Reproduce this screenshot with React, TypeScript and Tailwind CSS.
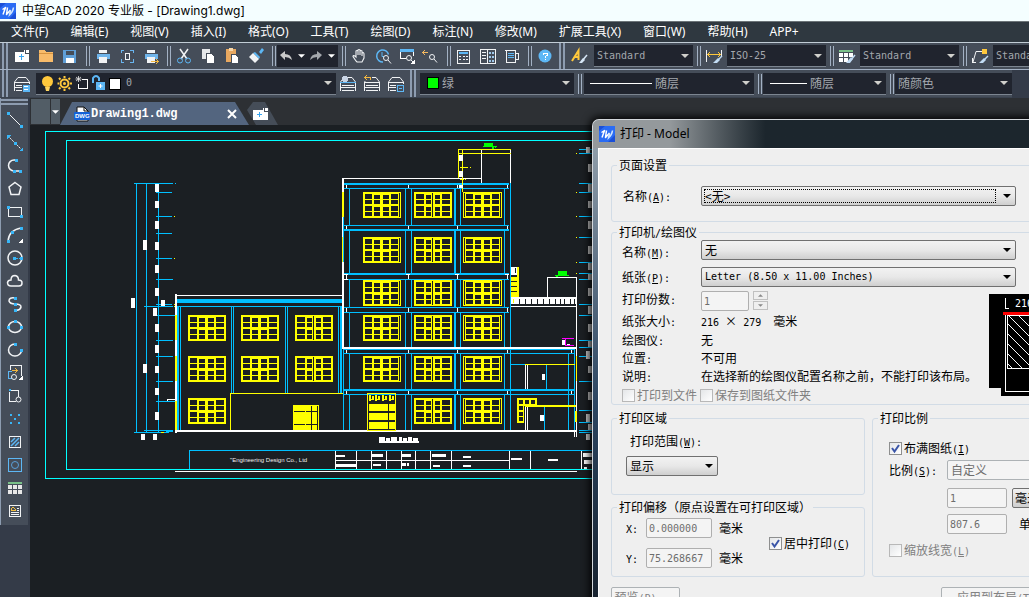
import type { ReactNode } from "react";

const SKY = "#00bfff";
const YEL = "#ffff00";
const WHT = "#ffffff";
const INK = "#1b1f23";

/* ---------- small shared pieces ---------- */

// Chinese runs and Latin runs use different faces, "_X" underlines the hot key
function Mixed({ text }: { text: string }) {
  const runs = text.match(/_[A-Z]|[\x20-\x5e\x60-\x7e]+|[^\x20-\x7e]+/g) ?? [];
  return (
    <span className="whitespace-pre">
      {runs.map((run, i) => {
        if (run[0] === "_")
          return (
            <span key={i} className="font-['DejaVu_Sans_Mono',monospace] text-[10px] leading-none underline">
              {run[1]}
            </span>
          );
        return /[\x20-\x7e]/.test(run) ? (
          <span key={i} className="font-['DejaVu_Sans_Mono',monospace] text-[10px] leading-none">
            {run}
          </span>
        ) : (
          <span key={i}>{run}</span>
        );
      })}
    </span>
  );
}

function Logo() {
  return (
    <svg viewBox="0 0 16 16" className="h-4 w-4 shrink-0">
      <rect width="16" height="16" fill="#2a6cf4" />
      <path d="M0 5 L6 0 H0Z M16 9 L9 16 H16Z" fill="#1a4fd8" />
      <path d="M2.500 6.500 L5.500 4.500 L3 11.500 M7.500 4.500 L6.500 11.500 L10.500 7" fill="none" stroke="#fff" strokeWidth="1.500" strokeLinejoin="round" />
      <path d="M10.500 7 L9.500 12 Q13 9 13.500 4.500" fill="none" stroke="#cfe4ff" strokeWidth="1.500" />
    </svg>
  );
}

function Grip() {
  return (
    <span className="flex w-[9px] shrink-0 justify-end pr-px">
      <span className="h-5 w-1 border-x border-[#a3b1c4]" />
    </span>
  );
}

function EdgeGrip() {
  return (
    <span className="flex w-[10px] shrink-0 justify-center self-stretch">
      <span className="w-[6px] border-x-2 border-[#8d9cb0]" />
    </span>
  );
}

function Arrow({ className }: { className: string }) {
  return (
    <svg viewBox="0 0 8 4" className={className}>
      <path d="M0 0 H8 L4 4Z" fill="currentColor" />
    </svg>
  );
}

function Tool({ name, children }: { name: string; children: ReactNode }) {
  return (
    <button aria-label={name} className="flex h-6 w-6 shrink-0 items-center justify-center">
      <svg viewBox="0 0 24 24" className="h-6 w-6" fill="none" stroke="#f1f3f5" shapeRendering="crispEdges">
        {children}
      </svg>
    </button>
  );
}

function Combo({
  name,
  value,
  width,
  latin,
  children,
}: {
  name: string;
  value: string;
  width: string;
  latin?: boolean;
  children?: ReactNode;
}) {
  return (
    <span className={`relative flex h-[22px] shrink-0 items-center border-b border-[#7c8590] bg-[#20242e] text-[#a3a7ad] ${width}`}>
      {children}
      <select
        aria-label={name}
        className={`h-full min-w-0 flex-1 appearance-none bg-transparent pl-[3px] ${
          latin ? "font-['DejaVu_Sans_Mono',monospace] text-[10px]" : "text-xs"
        }`}
      >
        <option>{value}</option>
      </select>
      <Arrow className="pointer-events-none absolute right-1 h-1 w-2 text-[#d0d0cc]" />
    </span>
  );
}

/* ---------- top bars ---------- */

const MENUS = [
  "文件(F)",
  "编辑(E)",
  "视图(V)",
  "插入(I)",
  "格式(O)",
  "工具(T)",
  "绘图(D)",
  "标注(N)",
  "修改(M)",
  "扩展工具(X)",
  "窗口(W)",
  "帮助(H)",
  "APP+",
];

function Printer() {
  return (
    <>
      <rect x="8" y="6" width="8" height="3" fill="#f1f3f5" stroke="none" />
      <rect x="6" y="10" width="13" height="5" fill="#6fb4ea" stroke="none" />
      <rect x="8" y="13" width="8" height="6" fill="#f1f3f5" stroke="none" />
    </>
  );
}

function Stack() {
  return (
    <>
      <path d="M8 5.500 H16" />
      <path d="M8 5.500 L4.500 10 M16 5.500 L19.500 10" shapeRendering="auto" />
      <path d="M4 10.500 H20 M6 13.500 H18 M4 15.500 H20 M4.500 11 V19 M19.500 11 V19 M6 18.500 H18" />
    </>
  );
}

function StandardBar() {
  return (
    <div className="flex h-[27px] shrink-0 items-center border-b border-[#a3b1c4] bg-[#454d59]">
      <EdgeGrip />
      <Tool name="新建">
        <path d="M5 8 H14 V6 H19 V18 H5Z" fill="#fff" stroke="none" />
        <path d="M15.500 6 V9.500 H19" stroke="#454d59" />
        <path d="M11.500 10 V16 M9 12.500 H14" stroke="#38a4f0" />
      </Tool>
      <Tool name="打开">
        <path d="M5 6 H10 L12 8 H19 V18 H5Z" fill="#f8bb6a" stroke="none" />
        <path d="M5 9.500 H19" stroke="#d89440" />
      </Tool>
      <Tool name="保存">
        <rect x="5" y="6" width="13" height="13" fill="#5f9fd8" stroke="none" />
        <rect x="8" y="7" width="8" height="4" fill="#454d59" stroke="none" />
        <rect x="8" y="14" width="8" height="5" fill="#fff" stroke="none" />
      </Tool>
      <Grip />
      <Tool name="打印">
        <Printer />
      </Tool>
      <Tool name="打印预览">
        <path d="M6 9 V6.500 H9 M15 6.500 H18 V9 M18 15 V18.500 H15 M9 18.500 H6 V15" stroke="#69b5f0" />
        <rect x="10.500" y="9.500" width="4" height="6" />
      </Tool>
      <Tool name="发布">
        <Printer />
        <path d="M12 17.500 H19 M17 15 L19 17.500 L17 20" stroke="#f4b840" />
      </Tool>
      <Grip />
      <Tool name="剪切">
        <g shapeRendering="auto">
          <path d="M8 5 L15 15 M16 5 L9 15" strokeWidth="1.500" />
          <circle cx="8" cy="16.500" r="2.500" stroke="#5db7f5" />
          <circle cx="16" cy="16.500" r="2.500" stroke="#5db7f5" />
        </g>
      </Tool>
      <Tool name="复制">
        <rect x="6" y="5" width="8" height="10" fill="#e6e8ea" stroke="none" />
        <path d="M10 9 H15 L18 12 V19 H10Z" fill="#fff" stroke="#454d59" />
      </Tool>
      <Tool name="粘贴">
        <rect x="6" y="5" width="10" height="13" fill="#e8a860" stroke="none" />
        <rect x="9" y="4" width="4" height="3" fill="#f6d6a8" stroke="none" />
        <path d="M11 10 H15 L18 13 V19 H11Z" fill="#fff" stroke="#454d59" />
      </Tool>
      <Tool name="格式刷">
        <g shapeRendering="auto" stroke="none">
          <path d="M15 8 L18 4 L20 6 L17 10Z" fill="#5db7f5" />
          <path d="M11 8 L16 13 L15 15 L9 9Z" fill="#5db7f5" />
          <path d="M9 9 L15 15 L11 19 L5 13Z" fill="#f1f3f5" />
        </g>
      </Tool>
      <Grip />
      <div className="flex h-[22px] w-[61px] shrink-0 items-center justify-around bg-[#20242e] text-white">
        <button aria-label="放弃">
          <svg viewBox="0 0 12 10" className="h-[10px] w-3">
            <path d="M0 4 L5 0 V3 Q11 3 12 9 Q9 6 5 6 V9Z" fill="#c9c9c9" />
          </svg>
        </button>
        <button aria-label="放弃列表">
          <Arrow className="h-1 w-[7px]" />
        </button>
        <button aria-label="重做">
          <svg viewBox="0 0 12 10" className="h-[10px] w-3">
            <path d="M12 4 L7 0 V3 Q1 3 0 9 Q3 6 7 6 V9Z" fill="#a4a8ad" />
          </svg>
        </button>
        <button aria-label="重做列表">
          <Arrow className="h-1 w-[7px]" />
        </button>
      </div>
      <Grip />
      <Tool name="平移">
        <path
          d="M9 17 L6 12.500 Q6 11 8 12 L9 13 V7 Q10 6 11 7 V11 V6 Q12 5 13 6 V11 V7 Q14 6 15 7 V12 V9 Q17 8 17 10 V14 L15 18 H10Z"
          shapeRendering="auto"
          strokeWidth="1.100"
        />
      </Tool>
      <Tool name="实时缩放">
        <g shapeRendering="auto">
          <path d="M12 18 A6 6 0 1 1 17.500 10.500" stroke="#5db7f5" strokeWidth="1.500" />
          <path d="M11 8 V12.500 H13" stroke="#5db7f5" />
          <circle cx="15" cy="14" r="2.500" />
          <path d="M17 16 L20 19.500" />
        </g>
      </Tool>
      <Tool name="窗口缩放">
        <path d="M5.500 14.500 V6 H18 V12 M5.500 14.500 H11" stroke="#fff" />
        <path d="M5 6.500 H19" stroke="#5db7f5" strokeWidth="3" />
        <circle cx="14" cy="14" r="2.500" shapeRendering="auto" />
        <path d="M16 16 L18 18" />
        <path d="M20 15 V20 H15Z" fill="#fff" stroke="none" />
      </Tool>
      <Tool name="缩放上一个">
        <path d="M4 8.500 H9 M6 6 L4 8.500 L6 11" stroke="#f4b860" />
        <g shapeRendering="auto">
          <circle cx="13" cy="13" r="2.500" />
          <path d="M15 15 L18 18.500" />
        </g>
      </Tool>
      <Grip />
      <Tool name="特性">
        <rect x="5.500" y="6.500" width="12" height="13" />
        <path d="M7 9 H16" stroke="#5db7f5" strokeWidth="2" />
        <path d="M7 12.500 H9 M11 12.500 H16 M7 15.500 H9 M11 15.500 H16" strokeDasharray="2 1" />
      </Tool>
      <Tool name="设计中心">
        <rect x="4.500" y="5.500" width="15" height="14" />
        <path d="M11.500 5 V20 M6 8.500 H10 M6 11.500 H10 M6 14.500 H10" />
        <path d="M13 8.500 H15 M16 8.500 H18 M13 12.500 H15 M16 12.500 H18 M13 16.500 H15 M16 16.500 H18" strokeWidth="2" stroke="#9fc8ea" />
      </Tool>
      <Tool name="工具选项板">
        <path d="M6 6.500 H15.500 V18.500 H6.500Z M16 9.500 H18.500 V15.500 H16" />
        <path d="M8 9.500 H14 M8 11.500 H14 M8 13.500 H14" stroke="#5db7f5" />
      </Tool>
      <Grip />
      <Tool name="帮助">
        <circle cx="12" cy="12" r="6.500" fill="#5db7f5" stroke="none" shapeRendering="auto" />
        <path d="M10 10.500 V9.500 H12 L14 9.500 V11.500 L12.500 12.500 V14 M12.500 15 V16" stroke="#fff" />
      </Tool>
      <EdgeGrip />
      <Tool name="文字样式">
        <g shapeRendering="auto">
          <path d="M5 17 L11.500 6.500 V16 M8 13 H12" stroke="#ffc83c" strokeWidth="2" />
          <path d="M20 11 L15 17" stroke="#d6e6f6" strokeWidth="1.500" />
          <path d="M16 14 L18 16 L15 19 H12Z" fill="#d6e6f6" stroke="none" />
        </g>
      </Tool>
      <Combo name="文字样式" value="Standard" width="ml-[3px] w-[99px]" latin />
      <Grip />
      <Tool name="标注样式">
        <path d="M4.500 6 V18 M19.500 6 V12" strokeWidth="1" />
        <path d="M6 10.500 H18 M8 8 L6 10.500 L8 13 M16 8 L18 10.500 L16 13" stroke="#ffc83c" />
        <path d="M20 12 L15 17" stroke="#c2dcf4" strokeWidth="1.500" shapeRendering="auto" />
        <path d="M16 14 L18 16 L15 19 H11Z" fill="#c2dcf4" stroke="none" shapeRendering="auto" />
      </Tool>
      <Combo name="标注样式" value="ISO-25" width="ml-px w-[99px]" latin />
      <Grip />
      <Tool name="表格样式">
        <rect x="4" y="6" width="14" height="2" fill="#79c089" stroke="none" />
        <path d="M4 9 H8 V13 H4Z M9 9 H13 V13 H9Z M14 9 H18 V13 H14Z M4 14 H8 V18 H4Z M9 14 H13 V18 H9Z" fill="#fff" stroke="none" />
        <path d="M20 11 L16 16" stroke="#c2dcf4" strokeWidth="1.500" shapeRendering="auto" />
        <path d="M16 13 L18 15 L15 19 H11Z" fill="#c2dcf4" stroke="none" shapeRendering="auto" />
      </Tool>
      <Combo name="表格样式" value="Standard" width="ml-px w-[99px]" latin />
      <Grip />
      <Tool name="多重引线样式">
        <path d="M5 18 L8 7.500 H14" shapeRendering="auto" />
        <path d="M4.500 14 V18.500 H8" />
        <rect x="14" y="5" width="5" height="5" fill="#ffc83c" stroke="none" />
        <path d="M20 12 L15 17" stroke="#c2dcf4" strokeWidth="1.500" shapeRendering="auto" />
        <path d="M16 14 L18 16 L15 19 H11Z" fill="#c2dcf4" stroke="none" shapeRendering="auto" />
      </Tool>
      <Combo name="多重引线样式" value="Standard" width="ml-px w-[99px]" latin />
    </div>
  );
}

function LayerBar() {
  return (
    <div className="flex h-7 shrink-0 bg-[#343b48]">
      <div className="flex w-[1012px] shrink-0 items-center border-b border-[#3a424e] bg-[#454d59]">
        <EdgeGrip />
        <Tool name="图层特性">
          <Stack />
          <rect x="12" y="12" width="8" height="8" fill="#5db7f5" stroke="#454d59" />
          <path d="M14 14.500 H18 M14 17.500 H18" stroke="#fff" />
        </Tool>
        <Combo name="图层" value="0" width="ml-[2px] w-[300px]" latin>
          <svg viewBox="0 0 82 20" className="ml-[5px] h-5 w-[82px] shrink-0">
            <circle cx="6.500" cy="8.500" r="5.500" fill="#ffc83c" />
            <path d="M4 14 H9 L8 18 H5Z" fill="#ffd560" />
            <circle cx="23.500" cy="10.500" r="4" fill="none" stroke="#ffc83c" strokeWidth="2" />
            <circle cx="23.500" cy="10.500" r="1.500" fill="#ffc83c" />
            <path
              d="M23.500 3 V5 M23.500 16 V18 M16.500 10.500 H18 M29 10.500 H31 M18 5 L19.500 6.500 M29 5 L27.500 6.500 M18 16 L19.500 14.500 M29 16 L27.500 14.500"
              stroke="#ffc83c"
              strokeWidth="2"
            />
            <path d="M41 6.500 H46.500 V15.500 H37.500 V11" fill="none" stroke="#fff" shapeRendering="crispEdges" />
            <path d="M37.500 3 V9 M34.500 6 H40.500 M35 4 L40 8 M40 4 L35 8" stroke="#e6e6e6" strokeWidth=".8" />
            <path d="M52 10 V5 Q55 1 58 5 V8" fill="none" stroke="#5db7f5" strokeWidth="2" />
            <rect x="55" y="9" width="9" height="8" fill="#5db7f5" />
            <path d="M59.500 11 V15 M57.500 13 H61.500" stroke="#fff" />
            <rect x="68.500" y="5.500" width="11" height="11" fill="#fff" stroke="#000" />
          </svg>
        </Combo>
        <Tool name="置为当前图层">
          <Stack />
          <circle cx="9" cy="7" r="3" fill="#c9d4e4" stroke="none" />
          <path d="M4 10.500 H20" stroke="#5db7f5" />
        </Tool>
        <Tool name="上一个图层">
          <Stack />
          <rect x="3" y="3" width="9" height="6" fill="#454d59" stroke="none" />
          <path d="M5 5.500 H10 V8 M7 3 L5 5.500 L7 8" stroke="#f4b840" />
        </Tool>
        <Tool name="图层状态">
          <Stack />
          <rect x="12" y="12" width="9" height="9" fill="#454d59" stroke="none" />
          <rect x="13.500" y="13.500" width="6" height="6" stroke="#5db7f5" />
          <path d="M15 16.500 H18" stroke="#5db7f5" />
        </Tool>
        <EdgeGrip />
        <Combo name="颜色" value="绿" width="ml-[2px] w-[154px]">
          <span className="ml-[7px] h-3 w-3 shrink-0 border border-black bg-[#00ff00]" />
        </Combo>
        <Grip />
        <Combo name="线型" value="随层" width="ml-px w-[170px]">
          <span className="ml-[6px] h-px w-[62px] shrink-0 bg-white" />
        </Combo>
        <Grip />
        <Combo name="线宽" value="随层" width="w-[123px]">
          <span className="ml-[7px] h-px w-[37px] shrink-0 bg-white" />
        </Combo>
        <Grip />
        <Combo name="打印样式" value="随颜色" width="w-[117px]" />
      </div>
    </div>
  );
}

/* ---------- left drawing tools ---------- */

function Dot({ x, y }: { x: number; y: number }) {
  return <rect x={x - 1.5} y={y - 1.5} width="3" height="3" fill="#38b6f8" stroke="none" />;
}

function DrawBar() {
  return (
    <aside className="w-[30px] shrink-0 bg-[#343b48] pr-[2px]">
      <div className="flex flex-col items-center border-l border-[#8d9cb0] bg-[#454d59] pt-px">
        <span className="h-[6px] w-full border-y-2 border-[#8d9cb0]" />
        <div className="flex flex-col py-[3px] [&>button]:h-[23px]">
          <Tool name="直线">
            <path d="M6 6 L18 18" shapeRendering="auto" />
            <Dot x={5.5} y={5.5} />
            <Dot x={18.5} y={18.5} />
          </Tool>
          <Tool name="构造线">
            <path d="M5 5 L19 19" strokeDasharray="2 1" shapeRendering="auto" />
            <path d="M4 4 H8 L4 8Z M20 20 H16 L20 16Z" fill="#38b6f8" stroke="none" />
            <Dot x={12} y={12} />
          </Tool>
          <Tool name="多段线">
            <path d="M14 6 H11 A5.500 5.500 0 0 0 11 17 H18" strokeWidth="1.500" shapeRendering="auto" />
            <Dot x={13.5} y={6.5} />
            <Dot x={11.5} y={17} />
            <Dot x={17.5} y={17} />
          </Tool>
          <Tool name="多边形">
            <path d="M12 5.500 L18 10 L16 17.500 H8 L6 10Z" strokeWidth="1.500" shapeRendering="auto" />
          </Tool>
          <Tool name="矩形">
            <path d="M5.500 7.500 H18.500 V16.500 H5.500Z" />
            <Dot x={5.5} y={7.5} />
            <Dot x={18.5} y={16.5} />
          </Tool>
          <Tool name="圆弧">
            <path d="M5 18 Q6 7 18 5" strokeWidth="1.500" shapeRendering="auto" />
            <path d="M20 15 V20 H15Z" fill="#fff" stroke="none" />
            <Dot x={5.5} y={18} />
            <Dot x={9.5} y={9.5} />
            <Dot x={18.5} y={5.5} />
          </Tool>
          <Tool name="圆">
            <circle cx="12" cy="12" r="7" strokeWidth="1.500" shapeRendering="auto" />
            <path d="M13 12 H18" stroke="#38b6f8" strokeDasharray="2 1" />
            <Dot x={11.5} y={12} />
            <Dot x={18.5} y={12} />
          </Tool>
          <Tool name="修订云线">
            <path
              d="M8 17 Q4.500 17 4.500 13.500 Q5 11 8 11 Q8 6.500 12 6.500 Q15.500 7 15.500 11 Q19 11 19 14 Q19 17 16 17Z"
              strokeWidth="1.500"
              shapeRendering="auto"
            />
          </Tool>
          <Tool name="样条曲线">
            <path d="M12 6 Q6 5 6 9 Q7 12 12 12 Q18 12 18 15 Q17 19 12 18" strokeWidth="1.500" shapeRendering="auto" />
            <Dot x={12} y={6} />
            <Dot x={12} y={12} />
            <Dot x={12} y={18} />
          </Tool>
          <Tool name="椭圆">
            <ellipse cx="12" cy="12" rx="6.500" ry="5.500" strokeWidth="1.500" shapeRendering="auto" />
            <Dot x={12} y={6.5} />
            <Dot x={5.5} y={12} />
            <Dot x={18.5} y={12} />
          </Tool>
          <Tool name="椭圆弧">
            <path d="M12 6 A6.500 6 0 1 0 18.500 12" strokeWidth="1.500" shapeRendering="auto" />
            <Dot x={12} y={6} />
            <Dot x={18.5} y={12} />
          </Tool>
          <Tool name="插入块">
            <path d="M7.500 9 V4.500 H18.500 V15" />
            <path d="M9 9.500 H14 M12 7 L14 9.500 L12 12" stroke="#f4b840" />
            <path d="M9 10.500 H5.500 V17 H9" stroke="#5db7f5" />
            <circle cx="11" cy="16" r="2.500" shapeRendering="auto" />
            <path d="M20 14 V19 H15Z" fill="#fff" stroke="none" />
          </Tool>
          <Tool name="创建块">
            <path d="M8 6.500 H15.500 V13 M6.500 8 V17.500 H13" />
            <circle cx="15.500" cy="15.500" r="2.500" shapeRendering="auto" />
            <rect x="6" y="5" width="2" height="2" fill="#38b6f8" stroke="none" />
          </Tool>
          <Tool name="点">
            <path
              d="M7 7 h2 v2 h-2Z M15 7 h2 v2 h-2Z M11 11 h2 v2 h-2Z M7 15 h2 v2 h-2Z M15 15 h2 v2 h-2Z"
              fill="#38b6f8"
              stroke="none"
            />
          </Tool>
          <Tool name="图案填充">
            <rect x="6.500" y="6.500" width="11" height="11" />
            <path d="M8 12 L12 8 M8 16 L16 8 M12 16 L16 12" stroke="#5db7f5" strokeWidth="1.500" shapeRendering="auto" />
          </Tool>
          <Tool name="面域">
            <rect x="5.500" y="5.500" width="13" height="13" stroke="#5db7f5" />
            <circle cx="12" cy="12" r="3.500" stroke="#5a9fd8" shapeRendering="auto" />
          </Tool>
          <Tool name="表格">
            <rect x="5" y="6" width="14" height="2" fill="#79c089" stroke="none" />
            <path
              d="M5 9 h4 v4 h-4Z M10 9 h4 v4 h-4Z M15 9 h4 v4 h-4Z M5 14 h4 v4 h-4Z M10 14 h4 v4 h-4Z M15 14 h4 v4 h-4Z"
              fill="#e8e8e8"
              stroke="none"
            />
          </Tool>
          <Tool name="多行文字">
            <rect x="6.500" y="6.500" width="11" height="11" />
            <path d="M8 12 V10 L10 8 L12 10 V12 M8 11 H12" stroke="#f4c040" />
            <path d="M14 9.500 H16 M14 11.500 H16 M8 13.500 H16 M8 15.500 H16" />
          </Tool>
        </div>
      </div>
    </aside>
  );
}

/* ---------- the drawing ---------- */

type Box = [x: number, y: number, w: number, h: number];

function Boxes({ fill, list }: { fill: string; list: Box[] }) {
  return (
    <g fill={fill}>
      {list.map(([x, y, w, h]) => (
        <rect key={`${x}-${y}-${w}-${h}`} x={x} y={y} width={w} height={h} />
      ))}
    </g>
  );
}

// panes: [offset, width] of each column, bars: thin extra mullions
const WINDOW_KINDS = {
  plain: { w: 38, panes: [[2, 7], [11, 6], [20, 6], [28, 8]], bars: [] as number[] },
  right: { w: 38, panes: [[2, 7], [11, 6], [20, 6], [28, 7]], bars: [36] },
  middle: { w: 38, panes: [[2, 8], [12, 5], [21, 5], [28, 8]], bars: [18] },
  both: { w: 39, panes: [[3, 7], [12, 6], [21, 6], [29, 7]], bars: [1, 37] },
};

function Window({ x, y, kind }: { x: number; y: number; kind: keyof typeof WINDOW_KINDS }) {
  const { w, panes, bars } = WINDOW_KINDS[kind];
  return (
    <g>
      <rect x={x} y={y} width={w} height="26" fill={YEL} />
      {panes.map(([dx, pw], i) => {
        const inner = i === 1 || i === 2 ? 1 : 0;
        return (
          <g key={dx} fill={INK}>
            <rect x={x + dx} y={y + 2 + inner} width={pw} height={5 - inner} />
            <rect x={x + dx} y={y + 8} width={pw} height="4" />
            <rect x={x + dx} y={y + 14 + inner} width={pw} height={5 - inner} />
            <rect x={x + dx} y={y + 20} width={pw} height="4" />
          </g>
        );
      })}
      {bars.map((b) => (
        <rect key={b} x={x + b} y={y + 1} width="1" height="24" fill={INK} />
      ))}
    </g>
  );
}

const FLOORS = [
  [188, 225],
  [229, 273],
  [279, 307],
  [312, 347],
  [353, 389],
  [394, 430],
];
const COLUMNS: [number, number][] = [[349, 1], [405, 1], [411, 1], [454, 2], [460, 1], [504, 1]];
const TICKS: [number, number][] = [[185, 3], [226, 3], [274, 5], [308, 4], [350, 3], [391, 3]];

function Drawing() {
  return (
    <svg viewBox="30 125 999 472" className="h-[472px] w-[999px]" shapeRendering="crispEdges">
      {/* sheet frames */}
      <g fill="none" stroke="#00ffff">
        <rect x="45.500" y="131.500" width="1100" height="347" />
        <rect x="66.500" y="140.500" width="1060" height="329" />
      </g>

      {/* dimensions, left side */}
      <Boxes
        fill={SKY}
        list={[
          [136, 183, 1, 250], [146, 183, 1, 250], [158, 192, 1, 240], [134, 183, 39, 1], [175, 183, 1, 1],
          [156, 192, 16, 1], [156, 216, 16, 1], [156, 233, 16, 1], [156, 258, 16, 1], [156, 279, 17, 1],
          [156, 304, 16, 1], [144, 306, 29, 1], [156, 315, 19, 1], [156, 340, 17, 1], [156, 356, 17, 1],
          [156, 381, 17, 1], [156, 401, 19, 1], [144, 430, 29, 1], [134, 432, 35, 1], [166, 431, 7, 1],
        ]}
      />
      <Boxes
        fill={WHT}
        list={[
          [155, 184, 4, 8], [155, 201, 4, 7], [155, 221, 4, 8], [155, 242, 4, 8], [155, 265, 4, 8], [155, 288, 4, 8],
          [161, 300, 4, 6], [143, 240, 4, 10], [131, 298, 4, 10], [153, 308, 4, 8], [155, 324, 4, 8], [155, 345, 4, 8],
          [143, 364, 4, 9], [155, 366, 4, 7], [155, 388, 4, 7], [155, 412, 4, 8], [141, 434, 4, 6], [153, 434, 4, 6],
          [167, 399, 9, 1], [167, 399, 1, 2],
        ]}
      />
      <Boxes fill={YEL} list={[[174, 216, 1, 1], [174, 258, 1, 1], [174, 304, 1, 1], [174, 306, 1, 1], [161, 432, 3, 1]]} />

      {/* low block */}
      <Boxes
        fill={SKY}
        list={[
          [177, 299, 165, 4], [177, 306, 165, 1], [177, 306, 2, 124], [180, 306, 1, 124], [231, 306, 1, 88],
          [233, 306, 1, 88], [285, 306, 1, 88], [287, 306, 1, 88], [338, 306, 1, 88], [340, 306, 2, 88],
        ]}
      />
      <Boxes fill={WHT} list={[[175, 294, 2, 139], [176, 295, 166, 1]]} />
      <Boxes
        fill={YEL}
        list={[[175, 315, 2, 25], [175, 356, 2, 25], [175, 401, 2, 29], [230, 393, 113, 1], [230, 393, 1, 37], [293, 405, 26, 25]]}
      />
      <Boxes
        fill={INK}
        list={[[294, 411, 11, 1], [306, 411, 11, 1], [294, 424, 11, 1], [306, 424, 11, 1], [311, 406, 1, 24], [317, 406, 1, 24]]}
      />
      {[315, 356].map((y) => (
        <g key={y}>
          <Window x={188} y={y} kind="plain" />
          <Window x={241} y={y} kind="plain" />
          <Window x={295} y={y} kind="middle" />
        </g>
      ))}
      <Window x={188} y={398} kind="plain" />

      {/* tower block */}
      {FLOORS.map(([top, bottom]) => (
        <Boxes key={top} fill={SKY} list={COLUMNS.map(([x, w]): Box => [x, top, w, bottom - top])} />
      ))}
      <Boxes
        fill={SKY}
        list={[
          [343, 183, 166, 2], [343, 188, 166, 1], [343, 225, 166, 1], [343, 229, 166, 2], [343, 273, 166, 2],
          [343, 279, 166, 1], [343, 307, 166, 1], [343, 312, 166, 1], [343, 349, 232, 1], [343, 353, 232, 1],
          [343, 389, 232, 2], [343, 394, 232, 1], [343, 183, 1, 79], [343, 349, 1, 81], [510, 183, 1, 247],
          [568, 353, 1, 77], [574, 349, 1, 81], [511, 364, 14, 1], [546, 365, 1, 24], [544, 407, 1, 23],
        ]}
      />
      {TICKS.map(([y, h]) => (
        <Boxes key={y} fill={WHT} list={[346, 408, 457, 507].map((x): Box => [x, y, 1, h])} />
      ))}
      <Boxes
        fill={WHT}
        list={[
          [342, 178, 2, 14], [342, 217, 1, 20], [342, 262, 2, 87], [342, 178, 140, 1], [343, 274, 5, 1], [343, 279, 5, 1],
          [406, 274, 4, 1], [455, 274, 4, 1], [505, 274, 4, 1],
          [342, 347, 234, 2], [571, 350, 1, 3], [571, 391, 1, 3], [176, 430, 401, 2],
          [481, 149, 1, 34], [510, 149, 1, 34],
        ]}
      />
      <Boxes
        fill={YEL}
        list={[
          [342, 192, 2, 25], [342, 237, 1, 25], [458, 149, 1, 29], [462, 149, 1, 43], [458, 149, 53, 1], [458, 153, 53, 1],
          [460, 167, 8, 1], [470, 167, 1, 1], [460, 179, 4, 1], [465, 179, 1, 1],
        ]}
      />
      <Boxes fill={WHT} list={[[459, 155, 4, 6], [459, 171, 4, 6], [459, 185, 4, 3]]} />
      <Boxes fill="#00ff00" list={[[484, 143, 9, 3], [483, 146, 14, 1], [492, 147, 2, 2], [495, 147, 1, 1]]} />
      {[192, 237, 280, 315, 356].map((y) => (
        <g key={y}>
          <Window x={363} y={y} kind="right" />
          <Window x={414} y={y} kind="middle" />
          <Window x={463} y={y} kind="both" />
        </g>
      ))}
      <Window x={414} y={398} kind="middle" />
      <Window x={463} y={398} kind="both" />

      {/* entrance */}
      <rect x="367.500" y="393.500" width="28" height="37" fill="none" stroke={YEL} />
      {[369, 375, 382, 389].map((x) => (
        <Boxes
          key={x}
          fill={YEL}
          list={[[x, 395, 2, 6], [x + 3, 396, 2, 4], [x, 399, 5, 1], [x, 404, x === 375 ? 7 : 6, 7], [x, 413, x === 375 ? 7 : 6, 7], [x, 422, x === 375 ? 7 : 6, 7]]}
        />
      ))}

      {/* annex on the right */}
      <Boxes
        fill={WHT}
        list={[
          [511, 267, 6, 8], [511, 297, 65, 7], [511, 306, 65, 1], [547, 277, 30, 1], [547, 277, 1, 20], [576, 277, 1, 160],
          [525, 365, 1, 24], [527, 365, 1, 24], [542, 374, 3, 6], [525, 406, 1, 24], [527, 406, 1, 24], [540, 415, 4, 6],
          [562, 340, 3, 5], [567, 344, 3, 2], [574, 432, 1, 5],
        ]}
      />
      <Boxes
        fill={YEL}
        list={[
          [517, 267, 2, 30], [511, 277, 6, 4], [511, 282, 6, 4], [511, 287, 6, 4], [511, 292, 6, 5], [513, 299, 1, 4],
          [525, 364, 50, 1], [576, 356, 1, 25], [575, 411, 2, 11], [517, 398, 7, 25], [524, 398, 13, 8], [525, 405, 51, 2],
        ]}
      />
      <Boxes
        fill={INK}
        list={[
          [515, 268, 1, 5], [519, 400, 4, 4], [525, 400, 4, 4], [531, 400, 4, 4], [519, 406, 4, 4], [519, 412, 4, 4], [519, 417, 4, 4],
          ...[519, 525, 531, 537, 543, 549, 555, 560, 564, 570, 574].map((x): Box => [x, 299, 1, 5]),
        ]}
      />
      <Boxes fill="#00ff00" list={[[558, 271, 9, 4], [555, 275, 14, 1], [556, 276, 2, 1]]} />
      <Boxes fill="#ff00ff" list={[[562, 338, 12, 1], [565, 338, 1, 8], [565, 345, 9, 1]]} />

      {/* dimensions, right side */}
      <Boxes
        fill={SKY}
        list={[149, 153, 183, 192, 216, 237, 262, 273, 279, 304, 315, 340, 347, 356, 381, 410, 422, 430, 432].map(
          (y): Box => [579, y, 14, 1],
        )}
      />
      <Boxes fill={YEL} list={[[576, 153, 1, 1], [576, 192, 1, 1], [576, 216, 1, 1], [576, 237, 1, 1], [576, 262, 1, 1], [576, 273, 1, 1]]} />
      <Boxes
        fill="#c4c4c4"
        list={[
          [586, 147, 4, 6], [588, 164, 4, 8], [588, 184, 4, 8], [588, 201, 4, 7], [588, 221, 4, 8], [588, 246, 4, 8],
          [588, 263, 4, 7], [588, 274, 4, 6], [588, 288, 4, 8], [588, 306, 4, 8], [588, 324, 4, 8], [588, 341, 4, 6],
          [586, 351, 4, 8], [588, 366, 4, 7], [588, 392, 4, 8], [586, 414, 4, 8], [588, 424, 4, 6], [586, 434, 4, 6],
        ]}
      />

      {/* caption blocks and title block */}
      <Boxes
        fill={WHT}
        list={[
          [379, 441, 40, 2], [379, 437, 6, 4], [386, 438, 4, 3], [391, 437, 6, 4], [399, 437, 3, 4], [403, 438, 4, 3], [408, 437, 4, 4], [413, 438, 5, 3],
          [175, 471, 402, 1], [335, 460, 175, 1],
          ...[335, 356, 371, 386, 401, 415, 430, 451, 509, 530, 581].map((x): Box => [x, 451, 1, 18]),
          [336, 455, 9, 2], [336, 464, 20, 3], [372, 454, 11, 3], [373, 464, 8, 2], [402, 454, 9, 3], [402, 463, 4, 3], [407, 463, 2, 3],
          [432, 454, 14, 3], [433, 465, 7, 2], [463, 456, 8, 2], [463, 465, 8, 2], [511, 458, 11, 2], [548, 459, 10, 2],
          [583, 453, 9, 4], [584, 460, 8, 4], [584, 467, 3, 2],
        ]}
      />
      <Boxes fill={SKY} list={[[189, 450, 405, 1], [189, 450, 1, 19]]} />
      <text x="230" y="462" fill="#f0f0f0" className="font-['Liberation_Sans',sans-serif] text-[6px]">
        "Engineering Design Co., Ltd
      </text>
    </svg>
  );
}

function Tabs() {
  return (
    <div className="flex h-[27px] shrink-0 items-end bg-[#2d3034] pl-px">
      <span className="mb-px h-[25px] w-[19px] bg-[#525d66]" />
      <button aria-label="标签列表" className="mb-px ml-px flex h-[25px] w-[9px] items-center justify-center bg-[#525d66] text-white">
        <Arrow className="h-[6px] w-[7px]" />
      </button>
      <div className="flex h-[23px] w-[189px] items-center bg-[#53657f] pl-[14px] text-white [clip-path:polygon(12px_0,calc(100%-14px)_0,100%_100%,0_100%)]">
        <svg viewBox="0 0 16 16" className="h-4 w-4 shrink-0">
          <path d="M3 1 H10 L14 5 V15 H3Z" fill="#fff" stroke="#111" />
          <path d="M10 1 V5 H14" fill="none" stroke="#111" />
          <rect x="0" y="6" width="16" height="8" rx="1" fill="#1462d8" />
          <text x="1" y="12" fill="#fff" className="font-['Liberation_Sans',sans-serif] text-[6px] font-bold">
            DWG
          </text>
        </svg>
        <span className="pl-px font-['Liberation_Mono',monospace] text-xs font-bold leading-4">Drawing1.dwg</span>
        <button aria-label="关闭" className="ml-auto mr-3">
          <svg viewBox="0 0 10 10" className="h-[10px] w-[10px]">
            <path d="M1 1 L9 9 M9 1 L1 9" stroke="#fff" strokeWidth="2" />
          </svg>
        </button>
      </div>
      <button
        aria-label="新建图纸"
        className="-ml-[5px] flex h-[23px] w-[34px] items-center justify-center bg-[#454d58] [clip-path:polygon(9px_0,21px_0,100%_100%,12px_100%,3px_8px)]"
      >
        <svg viewBox="0 0 16 12" className="h-3 w-4 shrink-0" shapeRendering="crispEdges">
          <path d="M0 2 H10 V0 H15 V12 H0Z" fill="#fff" />
          <path d="M11.500 0 V3.500 H15" fill="none" stroke="#454d58" />
          <path d="M6.500 4 V9 M4 6.500 H9" stroke="#38a4f0" />
        </svg>
      </button>
    </div>
  );
}

/* ---------- plot dialog ---------- */

function Group({
  title,
  className,
  inset,
  children,
}: {
  title: string;
  className: string;
  inset: string;
  children: ReactNode;
}) {
  return (
    <fieldset className={`min-w-0 rounded-[3px] border border-[#d2dce6] ${className}`}>
      <legend className="ml-[5px] h-4 px-[2px] leading-4">
        <Mixed text={title} />
      </legend>
      <div className={inset}>{children}</div>
    </fieldset>
  );
}

function Picker({
  id,
  value,
  width,
  latin,
  focused,
  disabled,
}: {
  id: string;
  value: string;
  width: string;
  latin?: boolean;
  focused?: boolean;
  disabled?: boolean;
}) {
  return (
    <span
      className={`relative flex h-5 shrink-0 items-center rounded-[2px] border ${
        disabled ? "border-[#adb2b5] bg-[#f4f4f4] text-[#6d6d6d]" : "border-[#707070] bg-linear-to-b from-[#f2f2f2] via-[#e8e8e8] to-[#cfcfcf]"
      } ${width}`}
    >
      <select
        id={id}
        disabled={disabled}
        className={`h-full w-full appearance-none pl-[3px] opacity-100 ${
          latin ? "font-['DejaVu_Sans_Mono',monospace] text-[10px]" : "text-xs"
        }`}
      >
        <option>{value}</option>
      </select>
      {focused && <span className="pointer-events-none absolute inset-y-[2px] left-[2px] right-[19px] border border-dotted border-black" />}
      <Arrow className="pointer-events-none absolute right-1 h-1 w-2" />
    </span>
  );
}

function Field({ id, value, width }: { id: string; value: string; width: string }) {
  return (
    <input
      id={id}
      defaultValue={value}
      disabled
      className={`h-5 shrink-0 rounded-[2px] border border-[#afafaf] bg-[#f4f4f4] px-[2px] font-['DejaVu_Sans_Mono',monospace] text-[10px] text-[#6d6d6d] ${width}`}
    />
  );
}

function Check({ label, checked, disabled }: { label: string; checked?: boolean; disabled?: boolean }) {
  return (
    <label className={`flex items-center gap-[2px] leading-4 ${disabled ? "text-[#808080]" : ""}`}>
      <span className="relative h-[13px] w-[13px]">
        <input
          type="checkbox"
          defaultChecked={checked}
          disabled={disabled}
          className={`block h-[13px] w-[13px] appearance-none border bg-linear-to-br from-[#e4e6e8] to-white ${
            disabled ? "border-[#b8b8b8]" : "border-[#8e8f8f]"
          }`}
        />
        {checked && (
          <svg viewBox="0 0 13 13" className="pointer-events-none absolute inset-0 h-[13px] w-[13px]">
            <path d="M3 6 L5.500 9.500 L10 3" fill="none" stroke="#3a55a8" strokeWidth="2" />
          </svg>
        )}
      </span>
      <Mixed text={label} />
    </label>
  );
}

function Info({ label, value, height }: { label: string; value: string; height: string }) {
  return (
    <div className={`flex items-center ${height}`}>
      <dt className="w-[79px] shrink-0">
        <Mixed text={label} />
      </dt>
      <dd>
        <Mixed text={value} />
      </dd>
    </div>
  );
}

function PaperPreview() {
  return (
    <svg viewBox="0 0 120 102" className="mt-[3px] h-[102px] w-[120px] shrink-0" shapeRendering="crispEdges">
      <path d="M0 0 H120 V102 H12 V94 H0Z" fill="#000" />
      <path d="M16.500 4 V15 M16 14.500 H20" stroke="#fff" />
      <path d="M16.500 21 V97.500 H120" fill="none" stroke="#fff" />
      <rect x="18.500" y="21.500" width="110" height="53" fill="none" stroke="#fff" />
      <path
        d="M19 70 L23 74 M19 60 L33 74 M19 50 L43 74 M19 40 L53 74 M19 30 L63 74 M20 22 L72 74 M30 22 L82 74 M40 22 L92 74 M50 22 L102 74"
        stroke="#fff"
      />
      <rect x="14" y="18" width="106" height="3" fill="#ff0000" />
      <text x="26" y="13" fill="#fff" className="font-['DejaVu_Sans_Mono',monospace] text-[10px]">
        216 MM
      </text>
    </svg>
  );
}

function PlotDialog() {
  return (
    <section className="absolute left-[592px] top-[119px] w-[640px] rounded-tl-[7px] border-l border-t border-[#d4d8dc] bg-linear-to-b from-[#9aa6b0] via-[#2c4560] via-55% to-[#141c26] pl-[5px] shadow-[0_0_8px_2px_#000] font-['Noto_Sans_CJK_SC',sans-serif] text-xs text-black">
      <div className="absolute inset-x-0 top-0 h-7 rounded-tl-[6px] bg-linear-to-r from-[#94999c] from-12% to-[#1c262d] to-27%" />
      <h2 className="relative flex h-7 items-center gap-[5px] pl-px font-['Noto_Sans','Noto_Sans_CJK_SC',sans-serif]">
        <Logo />
        <span className="leading-4">打印 - Model</span>
      </h2>
      <form className="relative border-l border-t border-white bg-[#efefef] pb-8 pl-[12px] pt-2">
        <Group title="页面设置" className="h-[65px]" inset="pl-[11px] pt-[13px]">
          <div className="flex items-center">
            <label htmlFor="page" className="w-[78px]">
              <Mixed text="名称(_A):" />
            </label>
            <Picker id="page" value="<无>" width="w-[315px]" focused />
          </div>
        </Group>

        <Group title="打印机/绘图仪" className="mt-[2px] h-[181px]" inset="pl-[10px]">
          <div className="flex h-[27px] items-start">
            <label htmlFor="printer" className="w-[79px] pt-1">
              <Mixed text="名称(_M):" />
            </label>
            <Picker id="printer" value="无" width="w-[315px]" />
          </div>
          <div className="flex h-6 items-start">
            <label htmlFor="paper" className="w-[79px] leading-5">
              <Mixed text="纸张(_P):" />
            </label>
            <Picker id="paper" value="Letter (8.50 x 11.00 Inches)" width="w-[315px]" latin />
          </div>
          <div className="flex items-start">
            <div className="w-[367px] shrink-0">
              <div className="flex h-5 items-start">
                <label htmlFor="copies" className="w-[79px] leading-4">
                  <Mixed text="打印份数:" />
                </label>
                <Field id="copies" value="1" width="w-12" />
                <span className="ml-1 flex flex-col gap-px text-[#888]">
                  <button type="button" disabled aria-label="增加" className="flex h-[9px] w-[15px] items-center justify-center border border-[#c0c0c0]">
                    <Arrow className="h-[3px] w-[5px] rotate-180" />
                  </button>
                  <button type="button" disabled aria-label="减少" className="flex h-[9px] w-[15px] items-center justify-center border border-[#c0c0c0]">
                    <Arrow className="h-[3px] w-[5px]" />
                  </button>
                </span>
              </div>
              <dl>
                <Info label="纸张大小:" value="216 × 279  毫米" height="h-5" />
                <Info label="绘图仪:" value="无" height="h-[18px]" />
                <Info label="位置:" value="不可用" height="h-[18px]" />
                <Info label="说明:" value="在选择新的绘图仪配置名称之前，不能打印该布局。" height="h-[18px]" />
              </dl>
              <div className="flex h-5 items-center gap-[3px]">
                <Check label="打印到文件" disabled />
                <Check label="保存到图纸文件夹" disabled />
              </div>
            </div>
            <PaperPreview />
          </div>
        </Group>

        <div className="flex gap-[7px] pt-[5px]">
          <div className="w-[254px] shrink-0">
            <Group title="打印区域" className="h-[85px]" inset="pl-[14px]">
              <label htmlFor="area" className="block pb-[6px] pl-1 pt-[6px] leading-[18px]">
                <Mixed text="打印范围(_W):" />
              </label>
              <Picker id="area" value="显示" width="w-[92px]" />
            </Group>
            <Group title="打印偏移（原点设置在可打印区域）" className="mt-1 h-[78px]" inset="pl-[14px] pt-[3px]">
              <div className="flex items-center">
                <div className="flex w-[143px] flex-col gap-[10px]">
                  <div className="flex items-center">
                    <label htmlFor="dx" className="w-5">
                      <Mixed text="X:" />
                    </label>
                    <Field id="dx" value="0.000000" width="w-[66px]" />
                    <span className="ml-[7px] leading-5">毫米</span>
                  </div>
                  <div className="flex items-center">
                    <label htmlFor="dy" className="w-5">
                      <Mixed text="Y:" />
                    </label>
                    <Field id="dy" value="75.268667" width="w-[66px]" />
                    <span className="ml-[7px] leading-5">毫米</span>
                  </div>
                </div>
                <Check label="居中打印(_C)" checked />
              </div>
            </Group>
          </div>

          <Group title="打印比例" className="h-[167px] flex-1" inset="pl-[16px]">
            <div className="flex h-[34px] items-end pb-1">
              <Check label="布满图纸(_I)" checked />
            </div>
            <div className="flex items-center">
              <label htmlFor="scale" className="w-[58px]">
                <Mixed text="比例(_S):" />
              </label>
              <Picker id="scale" value="自定义" width="w-[180px]" disabled />
            </div>
            <div className="ml-[58px] flex items-center gap-[5px] pt-2">
              <Field id="num" value="1" width="w-[60px]" />
              <select
                aria-label="单位"
                className="h-5 w-20 appearance-none rounded-[2px] border border-[#707070] bg-linear-to-b from-[#f2f2f2] to-[#cfcfcf] pl-[2px] text-xs"
              >
                <option>毫米</option>
              </select>
            </div>
            <div className="ml-[58px] flex items-center gap-3 pt-[6px]">
              <Field id="den" value="807.6" width="w-[60px]" />
              <label htmlFor="den">单位</label>
            </div>
            <div className="pt-2">
              <Check label="缩放线宽(_L)" disabled />
            </div>
          </Group>
        </div>

        <div className="flex gap-[261px] pt-[10px] text-[#838383]">
          <button type="button" disabled className="h-5 w-[69px] rounded-[2px] border border-[#adb2b5] bg-[#f4f4f4] pr-5 leading-4">
            <Mixed text="预览(_P)" />
          </button>
          <button type="button" disabled className="h-5 w-[110px] rounded-[2px] border border-[#adb2b5] bg-[#f4f4f4] leading-4">
            <Mixed text="应用到布局(_T)" />
          </button>
        </div>
      </form>
    </section>
  );
}

export default function App() {
  return (
    <div className="relative flex h-screen flex-col overflow-hidden bg-[#1b1f23] font-['Noto_Sans_CJK_SC',sans-serif] text-xs text-white">
      <header className="flex h-[22px] shrink-0 items-center gap-[6px] border-b border-[#6c7478] bg-[#f4feff] font-['Inter','Noto_Sans_CJK_SC',sans-serif] text-black">
        <Logo />
        <h1 className="whitespace-nowrap leading-5">中望CAD 2020 专业版 - [Drawing1.dwg]</h1>
      </header>
      <nav className="flex h-[21px] shrink-0 items-center gap-[22px] border-b border-[#c2cdd6] bg-[#2f3840] pl-[11px] font-['Noto_Sans','Noto_Sans_CJK_SC',sans-serif]">
        {MENUS.map((m) => (
          <button key={m} className="shrink-0 whitespace-nowrap leading-5">
            {m}
          </button>
        ))}
      </nav>
      <StandardBar />
      <LayerBar />
      <div className="flex min-h-0 flex-1">
        <DrawBar />
        <main className="flex min-w-0 flex-1 flex-col overflow-hidden">
          <Tabs />
          <div className="min-h-0 flex-1 overflow-hidden bg-[#1b1f23]">
            <Drawing />
          </div>
        </main>
      </div>
      <PlotDialog />
    </div>
  );
}
